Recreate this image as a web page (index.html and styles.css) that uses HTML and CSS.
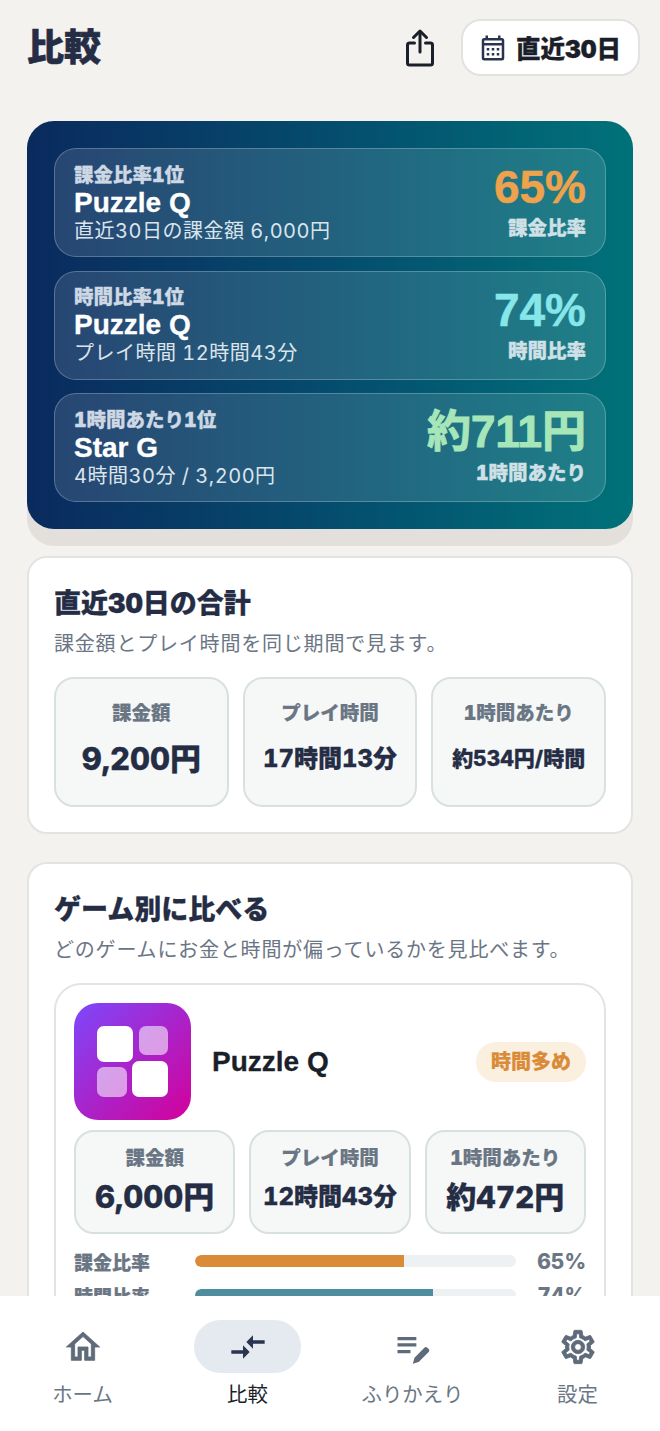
FILE: index.html
```html
<!DOCTYPE html>
<html lang="ja">
<head>
    <meta charset="UTF-8">
    <meta name="viewport" content="width=device-width, initial-scale=1.0">
    <title>比較</title>
    <link rel="stylesheet" href="styles.css">
</head>
<body>
    <div class="screen">
        <header class="top-bar">
            <h1>比較</h1>
            <div class="top-actions">
                <svg class="share-icon" viewBox="0 0 32 40" fill="none" stroke="#1b1f2a" stroke-width="3" stroke-linecap="round" stroke-linejoin="round">
                    <path d="M10.500 15H5.500a2 2 0 0 0-2 2v18a2 2 0 0 0 2 2h21a2 2 0 0 0 2-2V17a2 2 0 0 0-2-2h-5"/>
                    <path d="M16 24V4"/>
                    <path d="M9.500 9.500 16 3l6.500 6.500"/>
                </svg>
                <div class="period-button">
                    <svg class="calendar-icon" viewBox="0 0 24 24" fill="#2a3350">
                        <path d="M19 4h-1V2h-2v2H8V2H6v2H5a2 2 0 0 0-2 2v14a2 2 0 0 0 2 2h14a2 2 0 0 0 2-2V6a2 2 0 0 0-2-2zm0 16H5V10h14v10zM5 8V6h14v2H5z"/>
                        <path d="M7 12h2v2H7zm4 0h2v2h-2zm4 0h2v2h-2zM7 16h2v2H7zm4 0h2v2h-2zm4 0h2v2h-2z"/>
                    </svg>
                    <span>直近30日</span>
                </div>
            </div>
        </header>

        <section class="hero">
            <div class="hero-row">
                <div class="hero-left">
                    <div class="hero-label">課金比率1位</div>
                    <div class="hero-name">Puzzle Q</div>
                    <div class="hero-note">直近30日の課金額 6,000円</div>
                </div>
                <div class="hero-right">
                    <div class="hero-value orange">65%</div>
                    <div class="hero-unit">課金比率</div>
                </div>
            </div>
            <div class="hero-row">
                <div class="hero-left">
                    <div class="hero-label">時間比率1位</div>
                    <div class="hero-name">Puzzle Q</div>
                    <div class="hero-note">プレイ時間 12時間43分</div>
                </div>
                <div class="hero-right">
                    <div class="hero-value cyan">74%</div>
                    <div class="hero-unit">時間比率</div>
                </div>
            </div>
            <div class="hero-row">
                <div class="hero-left">
                    <div class="hero-label">1時間あたり1位</div>
                    <div class="hero-name">Star G</div>
                    <div class="hero-note">4時間30分 / 3,200円</div>
                </div>
                <div class="hero-right">
                    <div class="hero-value long green">約711円</div>
                    <div class="hero-unit">1時間あたり</div>
                </div>
            </div>
        </section>

        <section class="panel panel-total">
            <h2>直近30日の合計</h2>
            <p class="panel-sub">課金額とプレイ時間を同じ期間で見ます。</p>
            <div class="stat-grid total-grid">
                <div class="stat">
                    <div class="stat-label">課金額</div>
                    <div class="stat-value wide">9,200円</div>
                </div>
                <div class="stat">
                    <div class="stat-label">プレイ時間</div>
                    <div class="stat-value mid">17時間13分</div>
                </div>
                <div class="stat">
                    <div class="stat-label">1時間あたり</div>
                    <div class="stat-value small">約534円/時間</div>
                </div>
            </div>
        </section>

        <section class="panel">
            <h2>ゲーム別に比べる</h2>
            <p class="panel-sub">どのゲームにお金と時間が偏っているかを見比べます。</p>
            <div class="game-card">
                <div class="game-head">
                    <svg class="game-icon" viewBox="0 0 117 117">
                        <defs>
                            <linearGradient id="puzzle-bg" x1="0" y1="0" x2="1" y2="1">
                                <stop offset="0" stop-color="#7d48fb"/>
                                <stop offset="1" stop-color="#d4009a"/>
                            </linearGradient>
                        </defs>
                        <rect width="117" height="117" rx="24" fill="url(#puzzle-bg)"/>
                        <rect x="23" y="23" width="36" height="36" rx="7" fill="#fff"/>
                        <rect x="65" y="23" width="29" height="29" rx="7" fill="#fff" fill-opacity="0.56"/>
                        <rect x="23" y="64" width="30" height="30" rx="7" fill="#fff" fill-opacity="0.56"/>
                        <rect x="58" y="58" width="36" height="36" rx="7" fill="#fff"/>
                    </svg>
                    <div class="game-name">Puzzle Q</div>
                    <div class="game-badge">時間多め</div>
                </div>
                <div class="stat-grid game-grid">
                    <div class="stat">
                        <div class="stat-label">課金額</div>
                        <div class="stat-value wide">6,000円</div>
                    </div>
                    <div class="stat">
                        <div class="stat-label">プレイ時間</div>
                        <div class="stat-value mid">12時間43分</div>
                    </div>
                    <div class="stat">
                        <div class="stat-label">1時間あたり</div>
                        <div class="stat-value">約472円</div>
                    </div>
                </div>
                <div class="bar-row">
                    <div class="bar-label">課金比率</div>
                    <div class="bar-track"><div class="bar-fill orange-fill" style="width: 65%"></div></div>
                    <div class="bar-value">65%</div>
                </div>
                <div class="bar-row">
                    <div class="bar-label">時間比率</div>
                    <div class="bar-track"><div class="bar-fill teal-fill" style="width: 74%"></div></div>
                    <div class="bar-value">74%</div>
                </div>
            </div>
        </section>

        <nav class="bottom-nav">
            <div class="nav-item">
                <div class="nav-pill">
                    <svg viewBox="0 0 24 24" fill="#5f6b7a" stroke="#5f6b7a" stroke-width="0.5"><path d="M12 5.690l5 4.500V18h-2v-6H9v6H7v-7.810l5-4.500M12 3L2 12h3v8h6v-6h2v6h6v-8h3L12 3z"/></svg>
                </div>
                <span>ホーム</span>
            </div>
            <div class="nav-item active">
                <div class="nav-pill">
                    <svg viewBox="0 0 24 24" fill="#2a3350"><path d="M9.010 14H2v2h7.010v3L13 15l-3.990-4v3zm5.980-1v-3H22V8h-7.010V5L11 9l3.990 4z"/></svg>
                </div>
                <span>比較</span>
            </div>
            <div class="nav-item">
                <div class="nav-pill">
                    <svg viewBox="0 0 24 24" fill="#5f6b7a"><path d="M2.700 6h11.300v1.900H2.700zm0 3.700h11.300v2H2.700zm0 4.100h7.800v1.900H2.700z"/><path d="M18.800 12.400c.5-.5 1.300-.5 1.800 0l.8.8c.5.5.5 1.300 0 1.800l-6 6-3.500 1 1-3.600z"/></svg>
                </div>
                <span>ふりかえり</span>
            </div>
            <div class="nav-item">
                <div class="nav-pill">
                    <svg viewBox="0 0 24 24" fill="#5f6b7a" stroke="#5f6b7a" stroke-width="0.5"><path d="M19.430 12.980c.04-.32.07-.64.07-.98 0-.34-.03-.66-.07-.98l2.110-1.650c.19-.15.24-.42.12-.64l-2-3.460c-.09-.16-.26-.25-.44-.25-.06 0-.12.01-.17.03l-2.490 1c-.52-.4-1.080-.73-1.690-.98l-.38-2.650C14.460 2.180 14.250 2 14 2h-4c-.25 0-.46.18-.49.42l-.38 2.650c-.61.25-1.170.59-1.690.98l-2.490-1c-.06-.02-.12-.03-.18-.03-.17 0-.34.09-.43.25l-2 3.460c-.13.22-.07.49.12.64l2.110 1.650c-.04.32-.07.65-.07.98 0 .33.03.66.07.98l-2.110 1.650c-.19.15-.24.42-.12.64l2 3.460c.09.16.26.25.44.25.06 0 .12-.01.17-.03l2.490-1c.52.4 1.080.73 1.690.98l.38 2.650c.03.24.24.42.49.42h4c.25 0 .46-.18.49-.42l.38-2.650c.61-.25 1.170-.59 1.690-.98l2.490 1c.06.02.12.03.18.03.17 0 .34-.09.43-.25l2-3.460c.12-.22.07-.49-.12-.64l-2.110-1.650zm-1.980-1.710c.04.31.05.52.05.73 0 .21-.02.43-.05.73l-.14 1.130.89.7 1.080.84-.7 1.210-1.270-.51-1.040-.42-.9.68c-.43.32-.84.56-1.250.73l-1.060.43-.16 1.130-.2 1.350h-1.400l-.19-1.350-.16-1.130-1.060-.43c-.43-.18-.83-.41-1.230-.71l-.91-.7-1.060.43-1.270.51-.7-1.210 1.080-.84.89-.7-.14-1.130c-.03-.31-.05-.54-.05-.74s.02-.43.05-.73l.14-1.130-.89-.7-1.080-.84.7-1.210 1.270.51 1.040.42.9-.68c.43-.32.84-.56 1.250-.73l1.060-.43.16-1.130.2-1.350h1.390l.19 1.350.16 1.130 1.060.43c.43.18.83.41 1.230.71l.91.7 1.060-.43 1.270-.51.7 1.210-1.070.85-.89.7.14 1.130zM12 8c-2.210 0-4 1.790-4 4s1.790 4 4 4 4-1.790 4-4-1.790-4-4-4zm0 6c-1.100 0-2-.9-2-2s.9-2 2-2 2 .9 2 2-.9 2-2 2z"/></svg>
                </div>
                <span>設定</span>
            </div>
        </nav>
    </div>
</body>
</html>
```

FILE: styles.css
```css
* {
    box-sizing: border-box;
}

html, body {
    margin: 0;
    padding: 0;
    height: 100%;
    overflow: hidden;
}

body {
    font-family: Inter, "Noto Sans CJK JP", sans-serif;
    font-variant-numeric: tabular-nums;
    background-color: #f4f2ee;
    color: #252d45;
}

.screen {
    position: relative;
    height: 1431px;
    overflow: hidden;
    padding: 0 27px;
}

/* header */
.top-bar {
    display: flex;
    justify-content: space-between;
    align-items: center;
    height: 121px;
    padding-bottom: 26px;
}

.top-bar h1 {
    margin: 0;
    font-size: 37px;
    font-weight: 900;
    line-height: 1;
    -webkit-text-stroke: 0.6px;
}

.top-actions {
    display: flex;
    align-items: center;
    gap: 25px;
    margin-right: -7px;
}

.share-icon {
    width: 32px;
    height: 40px;
}

.period-button {
    display: flex;
    align-items: center;
    gap: 8px;
    width: 179px;
    height: 57px;
    padding-left: 15px;
    background: white;
    border: 2px solid #e2e2e0;
    border-radius: 20px;
    font-size: 24.500px;
    font-weight: 900;
    color: #1b1f2a;
    -webkit-text-stroke: 0.3px;
}

.calendar-icon {
    width: 30px;
    height: 30px;
}

/* hero card */
.hero {
    display: flex;
    flex-direction: column;
    gap: 13.500px;
    padding: 27px;
    margin-bottom: 27px;
    border-radius: 27px;
    background: linear-gradient(90deg, #0a2a5e 0%, #04506f 55%, #007279 100%);
    box-shadow: 0 17px 0 #e3e0db;
}

.hero-row {
    display: flex;
    justify-content: space-between;
    align-items: center;
    height: 109px;
    padding: 0 19px;
    border: 1.500px solid rgba(255, 255, 255, 0.24);
    border-radius: 22px;
    background: rgba(255, 255, 255, 0.12);
    color: white;
}

.hero-label {
    margin-top: 1px;
    font-size: 19.500px;
    font-weight: 900;
    line-height: 24px;
    color: #cdd8e4;
    -webkit-text-stroke: 0.3px;
}

.hero-name {
    font-family: "Liberation Sans", "Noto Sans CJK JP", sans-serif;
    font-size: 28px;
    font-weight: 700;
    line-height: 31px;
    -webkit-text-stroke: 0.3px;
}

.hero-note {
    font-size: 20px;
    letter-spacing: 0.500px;
    line-height: 26px;
    color: #dbe4ec;
}

.hero-right {
    padding-bottom: 4px;
    text-align: right;
}

.hero-value {
    font-family: "Liberation Sans", "Noto Sans CJK JP", sans-serif;
    font-size: 46px;
    font-weight: 700;
    line-height: 52px;
    -webkit-text-stroke: 0.5px;
}

.hero-value.long {
    font-size: 44px;
    -webkit-text-stroke: 1px;
}

.hero-unit {
    margin-top: 3px;
    font-size: 19.500px;
    font-weight: 900;
    line-height: 24px;
    color: #cfe0e6;
    -webkit-text-stroke: 0.3px;
}

.orange {
    color: #efa24c;
}

.cyan {
    color: #86e6ea;
}

.green {
    color: #a7e6b8;
}

/* white panels */
.panel {
    padding: 28px 25px 25px;
    margin-bottom: 28px;
    background: white;
    border: 2px solid #e2e4e3;
    border-radius: 20px;
}

.panel-total {
    height: 278px;
}

.panel h2 {
    margin: 0;
    font-size: 27px;
    font-weight: 900;
    line-height: 36px;
    -webkit-text-stroke: 0.3px;
}

.panel-sub {
    margin: 7px 0 0;
    font-size: 20px;
    letter-spacing: 0.800px;
    line-height: 30px;
    color: #6b7684;
}

.stat-grid {
    display: grid;
    grid-template-columns: repeat(3, 1fr);
    gap: 14px;
}

.total-grid {
    margin-top: 18px;
}

.total-grid .stat {
    height: 130px;
    gap: 16px;
    padding-bottom: 6px;
}

.game-grid {
    margin-top: 10px;
}

.game-grid .stat {
    height: 104px;
    gap: 9px;
    padding-bottom: 3px;
}

.stat {
    display: flex;
    flex-direction: column;
    justify-content: center;
    align-items: center;
    background: #f6f8f8;
    border: 2px solid #d9e0e2;
    border-radius: 20px;
}

.stat-label {
    font-size: 19.500px;
    font-weight: 900;
    line-height: 24px;
    color: #6b7684;
    -webkit-text-stroke: 0.2px;
}

.stat-value {
    font-size: 30px;
    font-weight: 800;
    line-height: 36px;
    white-space: nowrap;
    -webkit-text-stroke: 0.3px;
}

.stat-value.wide {
    font-size: 31px;
}

.stat-value.mid {
    font-size: 24px;
}

.stat-value.small {
    font-size: 21px;
}

/* game card */
.game-card {
    height: 340px;
    margin-top: 18px;
    padding: 18px;
    border: 2px solid #e2e4e3;
    border-radius: 27px;
}

.game-head {
    display: flex;
    align-items: center;
}

.game-icon {
    width: 117px;
    height: 117px;
}

.game-name {
    flex: 1;
    margin-left: 21px;
    font-family: "Liberation Sans", "Noto Sans CJK JP", sans-serif;
    font-size: 28px;
    font-weight: 700;
    color: #1b1f2a;
    -webkit-text-stroke: 0.3px;
}

.game-badge {
    padding: 0 15px;
    height: 40px;
    border-radius: 20px;
    background: #fbefdf;
    color: #d98b38;
    font-size: 20px;
    font-weight: 900;
    line-height: 40px;
    -webkit-text-stroke: 0.2px;
}

.bar-row {
    display: grid;
    grid-template-columns: 121px 1fr 70px;
    align-items: center;
    height: 34px;
}

.game-grid + .bar-row {
    margin-top: 10px;
}

.bar-label {
    font-size: 19px;
    font-weight: 900;
    color: #6b7684;
    -webkit-text-stroke: 0.2px;
}

.bar-track {
    height: 12px;
    border-radius: 6px;
    background: #eef1f2;
    overflow: hidden;
}

.bar-fill {
    height: 100%;
    border-radius: 6px 0 0 6px;
}

.orange-fill {
    background: #d98b38;
}

.teal-fill {
    background: #4d8d9e;
}

.bar-value {
    text-align: right;
    font-size: 21px;
    font-weight: 800;
    color: #6b7684;
}

/* bottom nav */
.bottom-nav {
    position: absolute;
    left: 0;
    right: 0;
    bottom: 0;
    display: grid;
    grid-template-columns: repeat(4, 1fr);
    height: 135px;
    padding-top: 24px;
    background: white;
}

.nav-item {
    display: flex;
    flex-direction: column;
    align-items: center;
    gap: 7px;
    font-size: 20.400px;
    line-height: 30px;
    color: #6b7684;
}

.nav-item.active {
    color: #1b1f2a;
}

.nav-pill {
    display: flex;
    justify-content: center;
    align-items: center;
    width: 107px;
    height: 53px;
    border-radius: 27px;
}

.active .nav-pill {
    background: #e5e9f0;
}

.nav-pill svg {
    width: 40px;
    height: 40px;
}
```
